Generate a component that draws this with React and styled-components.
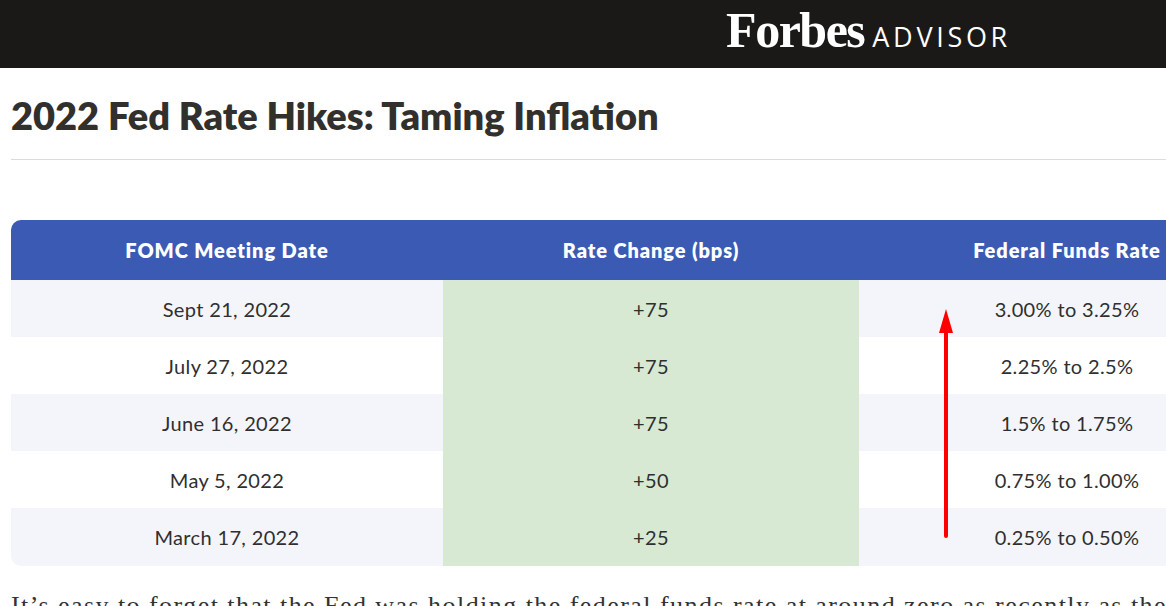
import React from 'react';
import styled, { createGlobalStyle } from 'styled-components';

const GlobalStyle = createGlobalStyle`
  html, body {
    margin: 0;
    padding: 0;
    overflow: hidden;
    background: #ffffff;
  }
  body {
    font-family: Lato, "Noto Sans", sans-serif;
    color: #333333;
  }
`;

const TopBar = styled.header`
  height: 68px;
  background-color: #1a1918;
  display: flex;
  align-items: center;
  justify-content: flex-end;
  padding-right: 155px;
`;

const Logo = styled.div`
  display: flex;
  align-items: baseline;
  gap: 8px;
  color: #ffffff;
  margin-top: -8px;
`;

const LogoMark = styled.span`
  font-family: "Liberation Serif", "DejaVu Serif", serif;
  font-weight: 700;
  font-size: 50px;
  letter-spacing: -1.5px;
`;

const LogoWord = styled.span`
  font-family: "Open Sans", "Noto Sans", sans-serif;
  font-weight: 400;
  font-size: 27px;
  letter-spacing: 3.7px;
`;

const Main = styled.main`
  padding-left: 11px;
`;

const Title = styled.h1`
  margin: 24px 0 0;
  font-family: Lato, "Noto Sans", sans-serif;
  font-weight: 800;
  font-size: 38px;
  line-height: 46px;
  color: #31302c;
`;

const Rule = styled.hr`
  margin: 21px 0 0;
  border: 0;
  border-top: 1px solid #dcdcdc;
`;

const TableWrap = styled.div`
  position: relative;
  margin-top: 60px;
  width: 1264px;
  border-radius: 10px;
  overflow: hidden;
`;

const Grid = styled.div`
  display: grid;
  grid-template-columns: 432px 416px 416px;
`;

const HeadCell = styled.div`
  height: 60px;
  display: flex;
  align-items: center;
  justify-content: center;
  background-color: #3a5ab4;
  color: #ffffff;
  font-weight: 800;
  font-size: 20px;
  letter-spacing: 0.9px;
`;

const Cell = styled.div`
  height: ${(p) => (p.$last ? 58 : 57)}px;
  display: flex;
  align-items: center;
  justify-content: center;
  font-size: 20px;
  letter-spacing: 0.35px;
  color: #2f2f2f;
  background-color: ${(p) => (p.$green ? '#d7e8d3' : p.$odd ? '#f4f5fa' : '#ffffff')};
`;

const Arrow = styled.svg`
  position: absolute;
  left: 927px;
  top: 88px;
`;

const Paragraph = styled.p`
  margin: 24px 0 0;
  font-family: "Liberation Serif", "DejaVu Serif", serif;
  font-size: 26px;
  line-height: 32px;
  letter-spacing: 1.45px;
  color: #333333;
  white-space: nowrap;
`;

const rows = [
  ['Sept 21, 2022', '+75', '3.00% to 3.25%'],
  ['July 27, 2022', '+75', '2.25% to 2.5%'],
  ['June 16, 2022', '+75', '1.5% to 1.75%'],
  ['May 5, 2022', '+50', '0.75% to 1.00%'],
  ['March 17, 2022', '+25', '0.25% to 0.50%'],
];

export default function App() {
  return (
    <>
      <GlobalStyle />
      <TopBar>
        <Logo>
          <LogoMark>Forbes</LogoMark>
          <LogoWord>ADVISOR</LogoWord>
        </Logo>
      </TopBar>
      <Main>
        <Title>2022 Fed Rate Hikes: Taming Inflation</Title>
        <Rule />
        <TableWrap>
          <Grid>
            <HeadCell>FOMC Meeting Date</HeadCell>
            <HeadCell>Rate Change (bps)</HeadCell>
            <HeadCell>Federal Funds Rate</HeadCell>
            {rows.map((r, i) => (
              <React.Fragment key={i}>
                <Cell $odd={i % 2 === 0} $last={i === rows.length - 1}>{r[0]}</Cell>
                <Cell $green $last={i === rows.length - 1}>{r[1]}</Cell>
                <Cell $odd={i % 2 === 0} $last={i === rows.length - 1}>{r[2]}</Cell>
              </React.Fragment>
            ))}
          </Grid>
          <Arrow width="16" height="232" viewBox="0 0 16 232">
            <path d="M8 1 L15 25 L1 25 Z" fill="#ff0000" />
            <line x1="8" y1="24" x2="8" y2="228" stroke="#ff0000" strokeWidth="4" strokeLinecap="round" />
          </Arrow>
        </TableWrap>
        <Paragraph>
          It’s easy to forget that the Fed was holding the federal funds rate at around zero as recently as the
        </Paragraph>
      </Main>
    </>
  );
}
